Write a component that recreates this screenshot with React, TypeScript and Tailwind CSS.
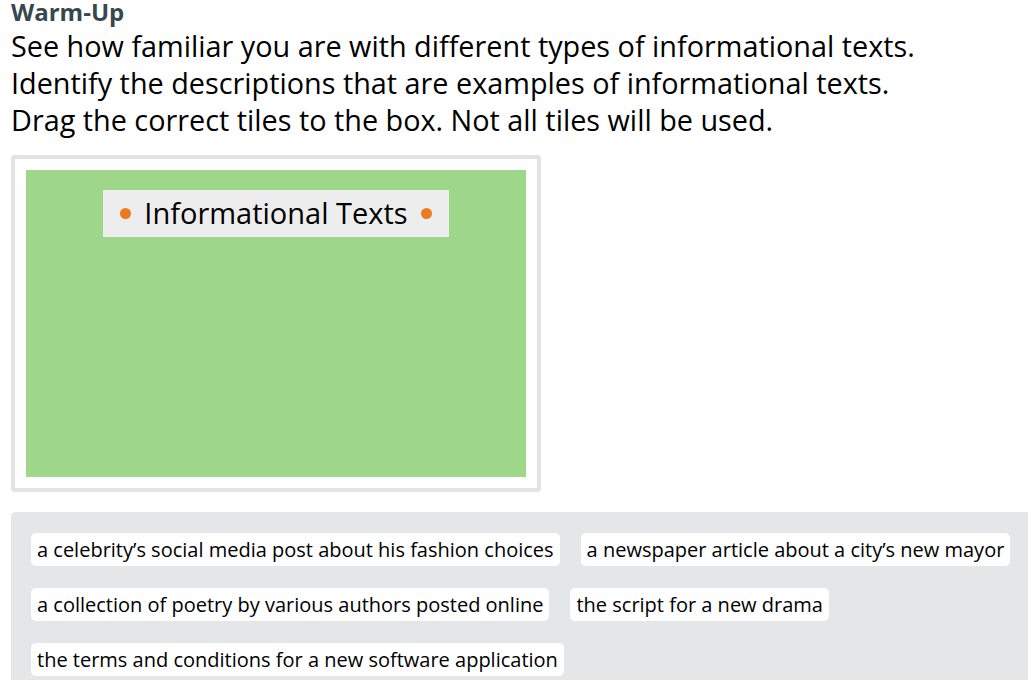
import React from "react";

const tiles = [
  "a celebrity\u2019s social media post about his fashion choices",
  "a newspaper article about a city\u2019s new mayor",
  "a collection of poetry by various authors posted online",
  "the script for a new drama",
  "the terms and conditions for a new software application",
];

function Dot() {
  return <span className="inline-block h-[11px] w-[11px] shrink-0 rounded-full bg-[#ee7a1f]" />;
}

export default function App() {
  return (
    <div className="h-[680px] w-[1028px] overflow-hidden bg-white font-['Open_Sans',sans-serif] text-black">
      <div className="pl-[11px]">
        <h2 className="text-[24px] font-bold leading-[24px] text-[#37474f]">Warm-Up</h2>
        <div className="mt-[3px] text-[28.8px] leading-[37px]">
          <p>See how familiar you are with different types of informational texts.</p>
          <p>Identify the descriptions that are examples of informational texts.</p>
          <p>Drag the correct tiles to the box. Not all tiles will be used.</p>
        </div>
      </div>

      <div className="ml-[11px] mt-[17px] w-[530px] rounded-[4px] border-[4px] border-[#e3e3e3] bg-white p-[11px]">
        <div className="flex h-[307px] flex-col items-center bg-[#9fd78a] pt-[20px]">
          <div className="flex h-[47px] w-[346px] items-center justify-center gap-[13px] bg-[#ededed] text-[29px] leading-none">
            <Dot />
            <span className="pb-[2px]">Informational Texts</span>
            <Dot />
          </div>
        </div>
      </div>

      <div className="ml-[11px] mt-[20px] flex h-[200px] flex-wrap content-start gap-x-[21px] gap-y-[22px] rounded-tl-[5px] bg-[#e5e6e7] pl-[20px] pt-[21px]">
        {tiles.map((t) => (
          <div
            key={t}
            className="flex h-[33px] items-center whitespace-nowrap rounded-[5px] bg-white px-[6px] text-[20px] leading-none"
          >
            {t}
          </div>
        ))}
      </div>
    </div>
  );
}
